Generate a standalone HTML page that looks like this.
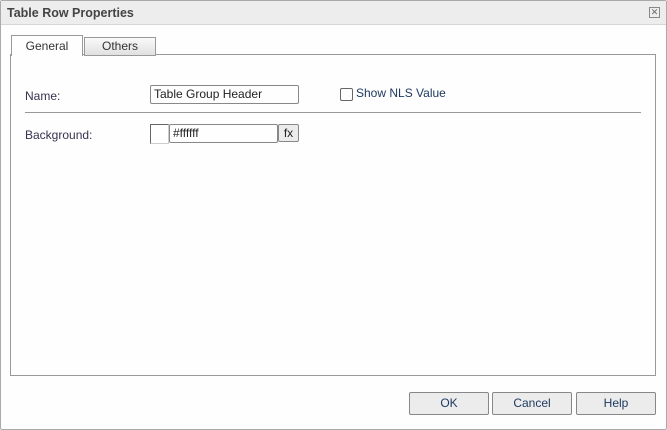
<!DOCTYPE html><html><head><style>
body{margin:0;width:667px;height:430px;overflow:hidden;font-family:"Liberation Sans",sans-serif;font-size:12px;color:#333;}
.d{position:absolute;left:0;top:0;width:665px;height:428px;border:1px solid #aaa;background:#fdfefd;border-radius:2px}
.a{position:absolute}
.t{left:0;top:0;width:665px;height:23px;background:#ededed;border-bottom:1px solid #d6d6d6}
.btn{border:1px solid #888;border-radius:2px;background:#ececec;text-align:center;line-height:21px;height:21px;color:#1e3a60;font-size:12px}
.lbl{color:#3a3050;font-size:12px}
</style></head><body><div class="d">
<div class="a t"></div>
<div class="a" style="left:6px;top:5px;font-weight:bold;font-size:12.5px;color:#444">Table Row Properties</div>
<div class="a" style="left:648px;top:6px;width:9px;height:9px;border:1px solid #888;font-size:9px;line-height:9px;text-align:center;color:#666">✕</div>
<div class="a" style="left:9px;top:53px;width:644px;height:320px;border:1px solid #999;background:#fdfefd"></div>
<div class="a" style="left:10px;top:34px;width:70px;height:20px;border:1px solid #999;border-bottom:none;background:#fdfefd;text-align:center;line-height:20px;color:#333">General</div>
<div class="a" style="left:83px;top:36px;width:70px;height:17px;border:1px solid #999;background:linear-gradient(#fafafa,#e0e0e0);text-align:center;line-height:17px;color:#333">Others</div>
<div class="a lbl" style="left:24px;top:88px">Name:</div>
<div class="a" style="left:149px;top:84px;width:144px;height:17px;border:1px solid #888;border-radius:2px;line-height:17px;padding-left:3px;color:#222">Table Group Header</div>
<div class="a" style="left:339px;top:87px;width:11px;height:11px;border:1px solid #666;border-radius:2px"></div>
<div class="a" style="left:355px;top:85px;color:#1e3a60">Show NLS Value</div>
<div class="a" style="left:24px;top:111px;width:616px;height:1px;background:#999"></div>
<div class="a lbl" style="left:24px;top:127px">Background:</div>
<div class="a" style="left:149px;top:123px;width:17px;height:18px;border:1px solid #666;border-right-color:#ccc;border-bottom-color:#ccc;background:#fff"></div>
<div class="a" style="left:168px;top:123px;width:104px;height:17px;border:1px solid #888;border-radius:2px;line-height:17px;padding-left:3px;color:#222">#ffffff</div>
<div class="a" style="left:277px;top:123px;width:19px;height:16px;border:1px solid #888;border-radius:2px;background:#ececec;text-align:center;line-height:16px;color:#222">fx</div>
<div class="a btn" style="left:408px;top:391px;width:78px">OK</div>
<div class="a btn" style="left:491px;top:391px;width:78px">Cancel</div>
<div class="a btn" style="left:575px;top:391px;width:78px">Help</div>
</div></body></html>
